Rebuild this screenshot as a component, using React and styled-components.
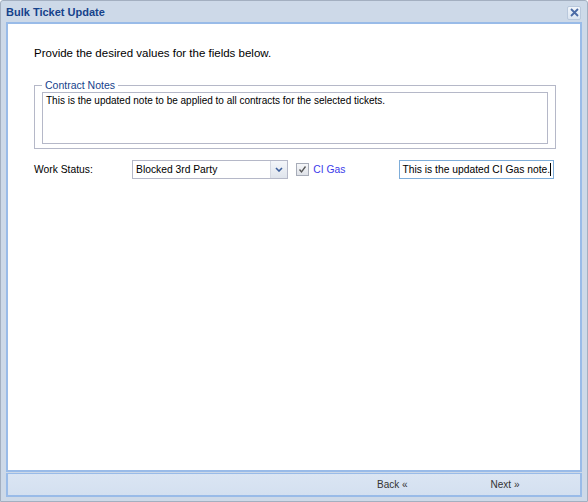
import React from "react";
import styled, { createGlobalStyle } from "styled-components";

const GlobalStyle = createGlobalStyle`
  html, body {
    margin: 0;
    padding: 0;
    background: #fff;
  }
  body {
    font-family: "Liberation Sans", Arial, sans-serif;
  }
`;

const Window = styled.div`
  width: 588px;
  height: 502px;
  box-sizing: border-box;
  border: 1px solid #a3afc0;
  border-radius: 3px 3px 0 0;
  background: #cdd9e8;
  display: flex;
  flex-direction: column;
  padding: 0 5px 4px 5px;
`;

const Header = styled.div`
  height: 21px;
  display: flex;
  align-items: center;
  justify-content: space-between;
`;

const Title = styled.span`
  font-size: 11px;
  font-weight: bold;
  color: #15428b;
  margin-top: 1px;
`;

const CloseButton = styled.button`
  width: 14px;
  height: 14px;
  padding: 0;
  margin-right: 1px;
  margin-top: 2px;
  border: 1px solid #b9c8dc;
  border-radius: 2px;
  background: linear-gradient(#f1f5fa, #dbe5f1);
  display: flex;
  align-items: center;
  justify-content: center;
`;

const Body = styled.div`
  flex: 1;
  background: #fff;
  border: 2px solid #99bbe8;
  padding: 22px 26px 0 26px;
  color: #000;
`;

const Intro = styled.p`
  margin: 0 0 19px 0;
  font-size: 11.5px;
  line-height: 14px;
`;

const Fieldset = styled.fieldset`
  margin: 0;
  padding: 0 7px 4px 7px;
  border: 1px solid #b5b8c8;
  width: 522px;
  box-sizing: border-box;
`;

const Legend = styled.legend`
  color: #15428b;
  font-size: 10.5px;
  padding: 0 3px;
`;

const NotesArea = styled.div`
  height: 52px;
  box-sizing: border-box;
  border: 1px solid #b5b8c8;
  padding: 1px 3px;
  font-size: 10px;
  line-height: 13px;
  margin-top: 1px;
`;

const Row = styled.div`
  display: flex;
  align-items: center;
  height: 19px;
  margin-top: 11px;
  font-size: 10.3px;
`;

const Label = styled.span`
  width: 99px;
`;

const Select = styled.div`
  width: 158px;
  height: 19px;
  box-sizing: border-box;
  border: 1px solid #b5b8c8;
  display: flex;
  align-items: stretch;
`;

const SelectText = styled.span`
  flex: 1;
  padding-left: 3px;
  display: flex;
  align-items: center;
`;

const SelectArrow = styled.span`
  width: 16px;
  border-left: 1px solid #d4d8e2;
  background: linear-gradient(#f4f6fa, #dfe4ec);
  display: flex;
  align-items: center;
  justify-content: center;
`;

const Check = styled.span`
  width: 11px;
  height: 11px;
  margin-left: 8px;
  border: 1px solid #a7acb8;
  background: linear-gradient(#f6f7f9, #dfe2e8);
  display: flex;
  align-items: center;
  justify-content: center;
`;

const CheckLabel = styled.span`
  color: #3b3bea;
  margin-left: 4px;
  width: 86px;
`;

const TextInput = styled.div`
  width: 157px;
  height: 19px;
  box-sizing: border-box;
  border: 1px solid #7eadd9;
  padding-left: 3px;
  display: flex;
  align-items: center;
  white-space: nowrap;
`;

const Caret = styled.span`
  display: inline-block;
  width: 1px;
  height: 13px;
  background: #000;
`;

const Footer = styled.div`
  height: 21px;
  margin-top: 1px;
  border: 1px solid #99bbe8;
  border-width: 1px 2px 2px 2px;
  background: linear-gradient(#dae5f3, #d4e0f0);
  display: flex;
  align-items: center;
  font-size: 10px;
  color: #333;
`;

const NavButton = styled.span`
  margin-left: ${(p) => p.$offset}px;
`;

export default function App() {
  return (
    <>
      <GlobalStyle />
      <Window>
        <Header>
          <Title>Bulk Ticket Update</Title>
          <CloseButton aria-label="close">
            <svg width="9" height="9" viewBox="0 0 9 9">
              <path d="M1 1 L8 8 M8 1 L1 8" stroke="#4a6aa5" strokeWidth="1.8" />
            </svg>
          </CloseButton>
        </Header>
        <Body>
          <Intro>Provide the desired values for the fields below.</Intro>
          <Fieldset>
            <Legend>Contract Notes</Legend>
            <NotesArea>
              This is the updated note to be applied to all contracts for the selected tickets.
            </NotesArea>
          </Fieldset>
          <Row>
            <Label>Work Status:</Label>
            <Select>
              <SelectText>Blocked 3rd Party</SelectText>
              <SelectArrow>
                <svg width="8" height="5" viewBox="0 0 8 5">
                  <path d="M1 1 L4 4 L7 1" stroke="#3d5f9c" strokeWidth="1.6" fill="none" />
                </svg>
              </SelectArrow>
            </Select>
            <Check>
              <svg width="9" height="9" viewBox="0 0 9 9">
                <path d="M1.5 4.5 L3.5 7 L7.5 1.5" stroke="#555" strokeWidth="1.3" fill="none" />
              </svg>
            </Check>
            <CheckLabel>CI Gas</CheckLabel>
            <TextInput>
              This is the updated CI Gas note.<Caret />
            </TextInput>
          </Row>
        </Body>
        <Footer>
          <NavButton $offset={369}>Back «</NavButton>
          <NavButton $offset={83}>Next »</NavButton>
        </Footer>
      </Window>
    </>
  );
}
